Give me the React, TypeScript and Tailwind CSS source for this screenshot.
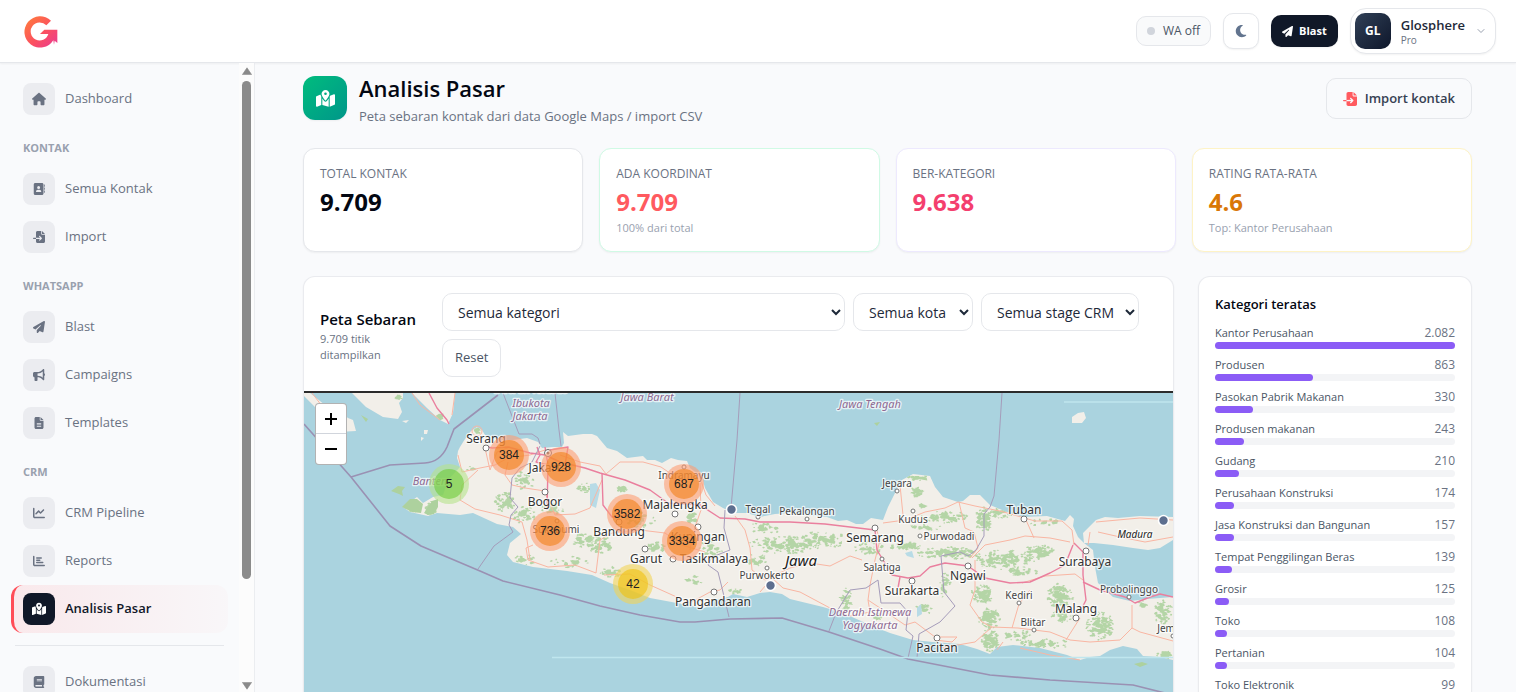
import type { ReactNode } from "react";
import type { IconType } from "react-icons";
import {
  FaAddressBook,
  FaBook,
  FaBullhorn,
  FaChartBar,
  FaChartLine,
  FaFileImport,
  FaFileLines,
  FaHouse,
  FaMapLocationDot,
  FaMoon,
  FaPaperPlane,
} from "react-icons/fa6";
import { ChevronDown } from "lucide-react";

/* ---------- Sidebar ---------- */

type NavItem = { label: string; icon: IconType; active?: boolean };

const sections: { title?: string; items: NavItem[] }[] = [
  { items: [{ label: "Dashboard", icon: FaHouse }] },
  {
    title: "KONTAK",
    items: [
      { label: "Semua Kontak", icon: FaAddressBook },
      { label: "Import", icon: FaFileImport },
    ],
  },
  {
    title: "WHATSAPP",
    items: [
      { label: "Blast", icon: FaPaperPlane },
      { label: "Campaigns", icon: FaBullhorn },
      { label: "Templates", icon: FaFileLines },
    ],
  },
  {
    title: "CRM",
    items: [
      { label: "CRM Pipeline", icon: FaChartLine },
      { label: "Reports", icon: FaChartBar },
      { label: "Analisis Pasar", icon: FaMapLocationDot, active: true },
    ],
  },
];

function NavLink({ label, icon: Icon, active }: NavItem) {
  return (
    <a
      href="#"
      aria-current={active ? "page" : undefined}
      className={
        active
          ? "flex h-12 items-center gap-2.5 rounded-xl border-l-[3px] border-[#ff4d57] bg-linear-to-r from-[#ff4d57]/10 to-[#ff4d57]/[0.02] pl-[9px] text-[13px] font-semibold text-gray-900"
          : "flex h-12 items-center gap-2.5 rounded-xl border-l-[3px] border-transparent pl-[9px] text-[13px] text-gray-500"
      }
    >
      <span
        className={
          active
            ? "flex size-8 items-center justify-center rounded-lg bg-gray-900 text-white"
            : "flex size-8 items-center justify-center rounded-lg bg-[#ebecf0] text-gray-500"
        }
      >
        <Icon className={label === "Dashboard" || active ? "size-3.5" : "size-3"} />
      </span>
      {label}
    </a>
  );
}

function Sidebar() {
  return (
    <aside className="flex w-[255px] shrink-0 border-r border-gray-200/70">
      <nav aria-label="Menu utama" className="flex-1 overflow-hidden px-[11px] pt-3">
        {sections.map((s) => (
          <div key={s.title ?? "top"}>
            {s.title && (
              <h2 className="px-3 pt-[17px] pb-[9px] text-[11px] leading-4 font-bold text-gray-400">{s.title}</h2>
            )}
            {s.items.map((it) => (
              <NavLink key={it.label} {...it} />
            ))}
          </div>
        ))}
        <hr className="mx-1 my-3 border-gray-200" />
        <NavLink label="Dokumentasi" icon={FaBook} />
      </nav>
      <div aria-hidden="true" className="flex w-[15px] flex-col items-center justify-between bg-[#fcfcfc] pt-1 pb-0.5">
        <div className="flex min-h-0 flex-1 flex-col items-center gap-1.5">
          <svg className="h-2 w-2.5 shrink-0" viewBox="0 0 10 8">
            <path d="M5 .8 9.6 7.6H.4Z" fill="#8a8a8a" stroke="#8a8a8a" strokeWidth=".6" strokeLinejoin="round" />
          </svg>
          <div className="h-[81%] w-[9px] rounded-full bg-[#8b8b8b]" />
        </div>
        <svg className="h-2 w-2.5 shrink-0" viewBox="0 0 10 8">
          <path d="M5 7.2 9.6.4H.4Z" fill="#8a8a8a" stroke="#8a8a8a" strokeWidth=".6" strokeLinejoin="round" />
        </svg>
      </div>
    </aside>
  );
}

/* ---------- Header ---------- */

function Logo() {
  return (
    <svg className="h-[33px] w-[34px]" viewBox="72 42 102 99" role="img" aria-label="Glosphere">
      <defs>
        <linearGradient id="brand" x1="0" y1="0" x2="1" y2="1">
          <stop offset="0" stopColor="#ff8038" />
          <stop offset=".55" stopColor="#fb5060" />
          <stop offset="1" stopColor="#e93a94" />
        </linearGradient>
      </defs>
      <path
        d="M153 59A47 47 0 1 0 160 118L162 131 164 119 172 126V86H133L120 99H145A27 27 0 1 1 139 73Z"
        fill="url(#brand)"
      />
    </svg>
  );
}

function Header() {
  return (
    <header className="flex h-[63px] shrink-0 items-center justify-between border-b border-gray-200 bg-white pr-5 pl-6 shadow-xs">
      <a href="#">
        <Logo />
      </a>
      <div className="flex items-center gap-3">
        <div className="flex h-[30px] items-center gap-2 rounded-[10px] border border-gray-200 bg-gray-50 px-2.5 text-[12px] font-medium text-gray-600">
          <span className="size-2 rounded-full bg-gray-300" />
          WA off
        </div>
        <button
          aria-label="Mode gelap"
          className="flex size-9 items-center justify-center rounded-[10px] border border-gray-200 bg-white text-slate-500 shadow-xs"
        >
          <FaMoon className="size-3.5" />
        </button>
        <button className="flex h-8 items-center gap-1.5 rounded-[10px] bg-gray-900 px-[11px] text-[11px] font-bold text-white shadow-xs">
          <FaPaperPlane className="size-[11px]" />
          Blast
        </button>
        <button className="flex h-[46px] items-center gap-2.5 rounded-2xl border border-gray-200 bg-white pr-2 pl-1 text-left shadow-xs">
          <span className="flex size-9 items-center justify-center rounded-[10px] bg-linear-to-br from-slate-700 to-slate-900 text-[12px] font-bold text-white">
            GL
          </span>
          <span className="flex flex-col">
            <span className="text-[13px] leading-[18px] font-semibold text-gray-800">Glosphere</span>
            <span className="text-[10px] leading-3 text-gray-500">Pro</span>
          </span>
          <ChevronDown className="size-3 text-gray-400" />
        </button>
      </div>
    </header>
  );
}

/* ---------- Map ---------- */

const land = [
  "M457 458L458 451 460 447 465 439 471 431 477 427 482 430 485 435 500 440 513 440 527 438 538 442 542 448 553 447 562 447 564 443 563 432 568 436 583 434 592 434 597 436 607 448 617 451 627 458 635 457 643 456 647 460 655 460 662 463 671 458 678 460 687 461 690 468 702 477 705 488 713 502 723 508 733 513 747 513 760 517 775 514 790 513 807 515 827 517 838 521 847 520 856 524 863 524 871 518 883 520 888 507 895 493 902 480 913 474 930 476 935 487 943 497 958 502 963 501 970 495 980 495 990 505 1007 512 1023 517 1047 516 1065 521 1070 515 1074 519 1073 526 1078 537 1084 543 1093 550 1095 567 1098 583 1113 597 1130 601 1147 599 1173 597V660L1160 657 1143 656 1137 649 1123 646 1110 650 1100 656 1090 657 1080 660 1067 655 1040 648 1013 645 997 647 990 654 977 649 960 644 933 642 913 640 890 633 870 625 843 613 823 607 790 599 782 594 770 592 760 593 747 597 733 594 728 597 713 600 705 608 698 607 677 603 650 598 630 590 610 583 592 575 567 571 533 567 513 562 507 555 510 543 521 534 513 527 497 524 473 513 460 515 437 513 428 516 410 512 403 507 417 497 423 503 433 497 443 495 448 480 460 467Z",
  "M304 393H310L325 405 338 410 348 418 353 420 356 431 338 432 331 417 318 410 304 396Z",
  "M352 393 366 407 383 417 398 419 402 412 399 403 403 398V393Z",
  "M412 393 427 408 440 420 448 424 453 413 455 393Z",
  "M1083 533 1096 520 1105 517 1118 518 1140 516 1173 517V540L1160 548 1148 550 1133 548 1113 545 1094 543 1084 543Z",
  "M1072 417 1078 413 1084 412 1086 418 1082 423 1072 423Z",
  "M424 430 428 430 427 434 424 434ZM421 437 424 438 421 441ZM402 421 409 420 406 423Z",
];

/* Woodland clusters: centre x, centre y, radius x, radius y, number of patches. */
const woods: [number, number, number, number, number][] = [
  [333, 396, 6, 7, 10],
  [365, 418, 3, 4, 2],
  [440, 417, 4, 3, 4],
  [398, 397, 6, 2, 4],
  [477, 431, 3, 3, 6],
  [471, 469, 4, 3, 4],
  [412, 507, 9, 5, 12],
  [431, 508, 6, 8, 14],
  [398, 491, 5, 3, 4],
  [505, 502, 10, 12, 26],
  [525, 480, 10, 10, 14],
  [524, 515, 12, 9, 18],
  [552, 508, 12, 7, 12],
  [585, 488, 8, 5, 10],
  [585, 540, 14, 8, 20],
  [525, 560, 12, 5, 8],
  [570, 562, 20, 6, 12],
  [600, 545, 12, 10, 18],
  [622, 488, 6, 4, 6],
  [640, 520, 16, 8, 12],
  [612, 572, 12, 6, 10],
  [655, 548, 10, 7, 12],
  [692, 518, 6, 6, 10],
  [710, 550, 12, 10, 14],
  [690, 580, 14, 6, 6],
  [735, 592, 8, 3, 6],
  [765, 528, 16, 6, 12],
  [785, 545, 36, 9, 44],
  [820, 540, 34, 8, 34],
  [755, 560, 14, 7, 8],
  [846, 600, 6, 12, 16],
  [870, 548, 16, 7, 18],
  [916, 492, 7, 5, 14],
  [918, 478, 14, 3, 8],
  [923, 506, 3, 2, 4],
  [945, 517, 24, 6, 26],
  [925, 527, 18, 3, 8],
  [905, 546, 16, 5, 20],
  [950, 553, 34, 6, 44],
  [984, 520, 9, 13, 32],
  [1000, 513, 12, 5, 14],
  [1045, 523, 18, 4, 8],
  [1005, 560, 30, 10, 60],
  [1038, 552, 16, 7, 30],
  [1022, 572, 16, 4, 14],
  [945, 585, 5, 14, 14],
  [925, 608, 10, 6, 6],
  [982, 594, 12, 9, 34],
  [990, 618, 12, 10, 36],
  [1060, 596, 13, 13, 46],
  [1062, 616, 12, 7, 16],
  [990, 640, 9, 12, 40],
  [1015, 635, 16, 6, 14],
  [1045, 644, 26, 5, 22],
  [1100, 626, 14, 14, 54],
  [1163, 612, 10, 12, 34],
  [1142, 605, 5, 5, 6],
  [1165, 655, 8, 4, 14],
  [877, 617, 6, 4, 4],
];

function makeRandom(seed: number) {
  let s = seed;
  return () => {
    s = (s * 1664525 + 1013904223) % 4294967296;
    return s / 4294967296;
  };
}

function woodland() {
  const rand = makeRandom(7);
  let d = "";
  for (const [cx, cy, rx, ry, n] of woods) {
    for (let i = 0; i < n * 2; i++) {
      const a = rand() * Math.PI * 2;
      const q = rand() ** 0.65;
      const x = cx + Math.cos(a) * rx * q;
      const y = cy + Math.sin(a) * ry * q;
      const size = 0.6 + rand() * 1.9 * (1.2 - q);
      const pts: string[] = [];
      for (let k = 0; k < 7; k++) {
        const t = (k / 7) * Math.PI * 2;
        const r = size * (0.5 + rand() * 0.9);
        pts.push(`${(x + Math.cos(t) * r * 1.5).toFixed(1)} ${(y + Math.sin(t) * r).toFixed(1)}`);
      }
      d += `M${pts.join("L")}Z`;
    }
  }
  return d;
}

const woodPath = woodland();

const borders = [
  "M503 393 519 434H532L538 438 540 444",
  "M555 393 559 430 561 446",
  "M740 393 737 440 731 508",
  "M1002 393 999 440 994 496 990 507 984 514 984 536 976 550 968 556",
  "M540 446 532 462 520 468 512 478 510 498 518 507 511 515 509 525 513 532 494 546 478 569",
  "M725 510 724 528 730 550 712 557 708 565 718 572 722 588 729 617",
  "M829 631 836 613 850 590 866 588 878 580 881 603 900 603 908 612 906 630 913 636 908 658",
  "M917 658 919 634 940 622 955 606 944 592 941 556 960 552 968 556",
];

const seaBorders = [
  "M304 424 351 477 390 526 421 546 480 571 503 581 560 595 600 606 640 615 680 622 695 622 730 619 782 618 829 632 880 649 908 659 990 675 1050 680 1133 685 1173 695",
  "M351 477 390 465 425 463Q440 462 447 447L454 429 498 395",
];

const roads = [
  "M458 455 462 472 480 468 495 465 508 458 530 455 545 450",
  "M485 448 490 470 497 452 510 447",
  "M478 470 462 485 460 500 475 509 500 515 522 522 527 540 530 560",
  "M508 462 505 475 512 485 525 488 545 491 548 500",
  "M545 492 555 515 575 514 590 508 602 480",
  "M560 455 580 462 600 466 606 474 620 462 643 462 661 467 680 480 700 478 706 495 715 506",
  "M533 545 526 548 528 560 548 567 575 565 596 573",
  "M596 573 600 540 612 533 640 530 665 533 682 545 705 552",
  "M604 575 630 574 650 585 690 603 710 592 720 590 728 582",
  "M700 483 701 510 694 530 690 550",
  "M735 516 745 530 750 548 752 570 765 580 775 575 790 568 810 563 830 566 850 556 862 560",
  "M760 592 772 578 783 588 800 592 830 608 850 616 870 612 868 600",
  "M875 525 880 540 875 560 870 585 868 600 880 608 905 625 915 622 935 637",
  "M900 485 903 515M883 523 905 520 925 512 945 508 958 502 975 506 1000 511 1035 521 1062 521 1072 530 1074 545",
  "M959 502 965 528 974 532 978 548 970 558",
  "M972 558 985 545 1010 540 1025 536 1050 538 1070 542",
  "M1026 520 1034 538M975 560 975 590 970 605 982 622 992 627 1018 628 1050 632 1070 640 1090 642 1120 640 1132 628 1140 632 1173 641",
  "M1030 590 1019 604 1012 628M992 627 975 642 940 648",
  "M1022 583 1045 576 1075 574 1083 580M1080 618 1066 640",
  "M1132 605 1132 628M1003 642 997 650M1020 648 1050 655 1080 660",
  "M1090 532 1088 545M1098 532 1120 537 1145 542 1173 537M1096 522 1140 518 1173 520",
  "M937 637 957 637 952 642 935 640",
  "M412 393 420 405 440 420M455 393 452 415",
  "M312 393 325 410 345 418",
];

const motorways = [
  "M484 446 492 448 508 447 530 453 545 455 560 462 585 468 600 473 625 480 650 490 668 503",
  "M602 473 603 505 612 517 635 515",
  "M668 503 700 505 720 518 745 519 760 522 790 522 825 524 850 527 875 530",
  "M537 447 540 455 536 462 548 465 545 447M550 450 568 447 565 465M548 465 547 510",
  "M875 530 877 550 883 560 892 575 908 578 920 576 930 567 945 563 968 566 985 578 1010 583 1030 582 1050 573 1065 565 1073 545",
  "M900 577 898 588M1074 543 1083 552 1083 575 1086 600 1080 612",
  "M1083 582 1100 590 1125 597 1135 603 1150 597 1160 594 1173 597",
  "M429 393 437 408 447 420 449 424",
];

type Label = { text: string; x: number; y: number; kind: "city" | "town" | "region" | "island" | "isle" };

const labels: Label[] = [
  { text: "Daerah Khusus", x: 531, y: 393, kind: "region" },
  { text: "Ibukota", x: 531, y: 407, kind: "region" },
  { text: "Jakarta", x: 530, y: 420, kind: "region" },
  { text: "Jawa Barat", x: 647, y: 401, kind: "region" },
  { text: "Jawa Tengah", x: 870, y: 408, kind: "region" },
  { text: "Banten", x: 430, y: 485, kind: "region" },
  { text: "Daerah Istimewa", x: 870, y: 616, kind: "region" },
  { text: "Yogyakarta", x: 870, y: 629, kind: "region" },
  { text: "Serang", x: 486, y: 443, kind: "city" },
  { text: "Jakarta", x: 548, y: 472, kind: "city" },
  { text: "Bogor", x: 545, y: 506, kind: "city" },
  { text: "Sukabumi", x: 556, y: 533, kind: "town" },
  { text: "Bandung", x: 619, y: 536, kind: "city" },
  { text: "Majalengka", x: 675, y: 509, kind: "city" },
  { text: "Indramayu", x: 684, y: 479, kind: "town" },
  { text: "Kuningan", x: 698, y: 541, kind: "city" },
  { text: "Garut", x: 646, y: 563, kind: "city" },
  { text: "Tasikmalaya", x: 714, y: 563, kind: "city" },
  { text: "Pangandaran", x: 713, y: 606, kind: "city" },
  { text: "Tegal", x: 758, y: 513, kind: "town" },
  { text: "Pekalongan", x: 807, y: 515, kind: "town" },
  { text: "Purwokerto", x: 767, y: 579, kind: "town" },
  { text: "Jawa", x: 801, y: 566, kind: "island" },
  { text: "Semarang", x: 875, y: 542, kind: "city" },
  { text: "Salatiga", x: 882, y: 571, kind: "town" },
  { text: "Jepara", x: 897, y: 487, kind: "town" },
  { text: "Kudus", x: 913, y: 523, kind: "town" },
  { text: "Purwodadi", x: 949, y: 540, kind: "town" },
  { text: "Ngawi", x: 968, y: 580, kind: "city" },
  { text: "Surakarta", x: 912, y: 595, kind: "city" },
  { text: "Pacitan", x: 937, y: 652, kind: "city" },
  { text: "Kediri", x: 1019, y: 599, kind: "town" },
  { text: "Blitar", x: 1033, y: 626, kind: "town" },
  { text: "Tuban", x: 1024, y: 514, kind: "city" },
  { text: "Surabaya", x: 1085, y: 566, kind: "city" },
  { text: "Malang", x: 1076, y: 613, kind: "city" },
  { text: "Madura", x: 1135, y: 538, kind: "isle" },
  { text: "Probolinggo", x: 1129, y: 593, kind: "town" },
  { text: "Jember", x: 1174, y: 632, kind: "town" },
];

const labelClass: Record<Label["kind"], string> = {
  city: "fill-[#333] text-[12px]",
  town: "fill-[#444] text-[10px]",
  region: "fill-[#8d6a92] text-[11px] italic",
  island: "fill-[#222] text-[15px] italic",
  isle: "fill-[#222] text-[10px] italic",
};

const places: [number, number, number][] = [
  [486, 448, 3],
  [545, 492, 3],
  [675, 514, 3],
  [698, 527, 3],
  [645, 549, 3],
  [673, 559, 3],
  [714, 592, 3],
  [684, 467, 2],
  [557, 521, 2],
  [619, 522, 3],
  [758, 517, 2],
  [807, 519, 2],
  [767, 568, 2],
  [875, 528, 3],
  [882, 559, 2],
  [897, 491, 2],
  [913, 511, 2],
  [920, 536, 2],
  [968, 566, 3],
  [912, 581, 3],
  [937, 638, 3],
  [1019, 603, 2],
  [1034, 630, 2],
  [1024, 519, 3],
  [1086, 551, 3],
  [1076, 618, 3],
  [1129, 597, 2],
  [1173, 636, 2],
];

const tones = {
  large: ["rgba(253,156,115,.6)", "rgba(241,128,23,.6)"],
  medium: ["rgba(241,211,87,.6)", "rgba(240,194,12,.6)"],
  small: ["rgba(181,226,140,.6)", "rgba(110,204,57,.6)"],
};

const clusters: { n: number; x: number; y: number; tone: keyof typeof tones }[] = [
  { n: 384, x: 509, y: 455, tone: "large" },
  { n: 928, x: 561, y: 467, tone: "large" },
  { n: 5, x: 449, y: 484, tone: "small" },
  { n: 736, x: 550, y: 531, tone: "large" },
  { n: 687, x: 684, y: 484, tone: "large" },
  { n: 3582, x: 627, y: 514, tone: "large" },
  { n: 3334, x: 682, y: 541, tone: "large" },
  { n: 42, x: 633, y: 584, tone: "medium" },
];

const pins = [
  [731, 509],
  [770, 585],
  [1163, 520],
];

function JavaMap() {
  return (
    <svg
      className="absolute inset-0 size-full"
      viewBox="304 393 869 299"
      preserveAspectRatio="xMinYMin slice"
      role="img"
      aria-label="Peta sebaran kontak di Pulau Jawa"
    >
      <defs>
        <clipPath id="land">
          <path d={land.join("")} />
        </clipPath>
      </defs>
      <rect x="304" y="393" width="2000" height="1200" fill="#aad3df" />
      <path d={land.join("")} fill="#f2efe9" />
      <path d={woodPath} fill="#add19e" fillOpacity=".9" clipPath="url(#land)" />
      <g fill="#add19e">
        <path d="M402 507 410 499 417 499 423 504 421 513 412 512Z" />
        <path d="M424 513 432 501 438 499 438 507 434 514 428 515Z" />
        <path d="M391 491 398 486 405 487 402 491 403 496 399 494ZM361 415 368 419 366 422Z" />
        <path d="M1134 664 1142 662 1148 664 1140 667ZM874 423 880 422 877 426Z" />
      </g>
      <path d="M590 484 596 483 600 490 596 508 590 505ZM905 553 912 551 914 558 907 556ZM917 608 921 604 922 614 917 617Z" fill="#b8dbe6" />
      <g fill="none" stroke="#f9b6a3" strokeWidth="1" strokeLinejoin="round">
        {roads.map((d) => (
          <path key={d} d={d} />
        ))}
        <circle cx="477" cy="431" r="5" />
      </g>
      <g fill="none" stroke="#ea7f9e" strokeWidth="1.4" strokeLinejoin="round">
        {motorways.map((d) => (
          <path key={d} d={d} />
        ))}
      </g>
      <g fill="none" stroke="#a59cba" strokeWidth="1" strokeLinejoin="round">
        {borders.map((d) => (
          <path key={d} d={d} />
        ))}
      </g>
      <g fill="none" stroke="#9a91b3" strokeWidth="1.6" strokeLinejoin="round">
        {seaBorders.map((d) => (
          <path key={d} d={d} />
        ))}
      </g>
      <path d="M552 657.5H1173M1064 402H1173" stroke="#c0e6ee" strokeWidth="1.5" />
      {places.map(([x, y, r]) => (
        <circle key={`${x}-${y}`} cx={x} cy={y} r={r} fill="#fff" stroke="#666" strokeWidth=".9" />
      ))}
      <circle cx="548" cy="453" r="3.5" fill="#fff" stroke="#666" />
      <circle cx="548" cy="453" r="1.5" fill="#666" />
      <g
        className="font-['Noto_Sans',sans-serif]"
        textAnchor="middle"
        stroke="#fff"
        strokeOpacity=".7"
        strokeWidth="2.6"
        strokeLinejoin="round"
        paintOrder="stroke"
      >
        {labels.map((l) => (
          <text key={`${l.text}-${l.y}`} x={l.x} y={l.y} className={labelClass[l.kind]}>
            {l.text}
          </text>
        ))}
      </g>
      {pins.map(([x, y]) => (
        <circle key={x} cx={x + 0.5} cy={y + 0.5} r="5" fill="#5d6f8f" stroke="#fff" strokeWidth="1.6" />
      ))}
      <g textAnchor="middle" className="fill-[#222] font-['Liberation_Sans',Arial,sans-serif] text-[12px]">
        {clusters.map((c) => (
          <g key={c.n}>
            <circle cx={c.x} cy={c.y} r="20" style={{ fill: tones[c.tone][0] }} />
            <circle cx={c.x} cy={c.y} r="15" style={{ fill: tones[c.tone][1] }} />
            <text x={c.x} y={c.y + 4}>
              {c.n}
            </text>
          </g>
        ))}
      </g>
    </svg>
  );
}

function FilterSelect({ label, className }: { label: string; className: string }) {
  return (
    <select
      aria-label={label}
      className={`h-[38px] rounded-[10px] border border-gray-200 bg-white pl-[11px] text-[14px] text-gray-800 ${className}`}
    >
      <option>{label}</option>
    </select>
  );
}

function MapCard() {
  return (
    <section className="flex min-w-0 flex-col overflow-hidden rounded-t-xl border border-b-0 border-gray-200/80 bg-white shadow-xs">
      <div className="flex items-center gap-3 px-4 pt-4 pb-3.5">
        <div className="w-[110px] shrink-0">
          <h2 className="text-[15px] leading-6 font-semibold text-gray-950">Peta Sebaran</h2>
          <p className="w-24 text-[11px] leading-4 text-gray-500">9.709 titik ditampilkan</p>
        </div>
        <div className="flex flex-1 flex-wrap gap-2 pr-[18px]">
          <FilterSelect label="Semua kategori" className="grow basis-[400px]" />
          <FilterSelect label="Semua kota" className="w-[120px]" />
          <FilterSelect label="Semua stage CRM" className="w-[158px]" />
          <button className="h-[38px] rounded-[10px] border border-gray-200 bg-white px-3 text-[13px] text-gray-600">
            Reset
          </button>
        </div>
      </div>
      <div className="relative min-h-72 flex-1 overflow-hidden border-t-2 border-[#2b2b2b]">
        <JavaMap />
        <div className="absolute top-2.5 left-[11px] flex flex-col rounded-sm border border-black/30 bg-white text-black">
          <button aria-label="Perbesar" className="flex size-[30px] items-center justify-center border-b border-gray-300">
            <svg className="size-3.5" viewBox="0 0 14 14" stroke="currentColor" strokeWidth="2">
              <path d="M7 1V13M1 7H13" />
            </svg>
          </button>
          <button aria-label="Perkecil" className="flex size-[30px] items-center justify-center">
            <svg className="size-3.5" viewBox="0 0 14 14" stroke="currentColor" strokeWidth="2">
              <path d="M1 7H13" />
            </svg>
          </button>
        </div>
      </div>
    </section>
  );
}

/* ---------- Statistics ---------- */

const stats = [
  { label: "TOTAL KONTAK", value: "9.709", border: "border-gray-200", tone: "text-gray-950" },
  { label: "ADA KOORDINAT", value: "9.709", note: "100% dari total", border: "border-emerald-100", tone: "text-[#ff5a5f]" },
  { label: "BER-KATEGORI", value: "9.638", border: "border-violet-100", tone: "text-[#f43f6e]" },
  { label: "RATING RATA-RATA", value: "4.6", note: "Top: Kantor Perusahaan", border: "border-amber-100", tone: "text-[#d97706]" },
];

const categories: [string, string, number][] = [
  ["Kantor Perusahaan", "2.082", 100],
  ["Produsen", "863", 41],
  ["Pasokan Pabrik Makanan", "330", 16],
  ["Produsen makanan", "243", 12],
  ["Gudang", "210", 10],
  ["Perusahaan Konstruksi", "174", 8],
  ["Jasa Konstruksi dan Bangunan", "157", 8],
  ["Tempat Penggilingan Beras", "139", 7],
  ["Grosir", "125", 6],
  ["Toko", "108", 5],
  ["Pertanian", "104", 5],
  ["Toko Elektronik", "99", 5],
];

function Card({ className, children }: { className: string; children: ReactNode }) {
  return <section className={`border bg-white px-4 shadow-xs ${className}`}>{children}</section>;
}

export default function App() {
  return (
    <div className="flex h-screen flex-col overflow-hidden bg-[#f9fafc] font-['Open_Sans','Noto_Sans',sans-serif] text-gray-900">
      <Header />
      <div className="flex min-h-0 flex-1">
        <Sidebar />
        <main className="flex min-w-0 flex-1 flex-col overflow-hidden pt-[13px] pr-11 pl-12">
          <div className="mb-5 flex items-start justify-between">
            <div className="flex items-start gap-3">
              <span className="flex size-11 items-center justify-center rounded-xl bg-linear-to-br from-emerald-500 to-teal-600 text-white shadow-xs">
                <FaMapLocationDot className="size-[19px]" />
              </span>
              <div>
                <h1 className="text-[22px] leading-6 font-semibold text-gray-950">Analisis Pasar</h1>
                <p className="mt-1 text-[13px] leading-6 text-gray-500">
                  Peta sebaran kontak dari data Google Maps / import CSV
                </p>
              </div>
            </div>
            <button className="mt-0.5 flex h-[41px] items-center gap-2 rounded-[10px] border border-gray-200 px-4 text-[13px] font-semibold text-gray-700">
              <FaFileImport className="size-3.5 text-[#ff5a5f]" />
              Import kontak
            </button>
          </div>

          <div className="mb-6 grid grid-cols-4 gap-4">
            {stats.map((s) => (
              <Card key={s.label} className={`h-[104px] rounded-xl pt-[17px] ${s.border}`}>
                <h2 className="text-[12px] leading-4 font-medium text-gray-500">{s.label}</h2>
                <p className={`mt-1 text-[24px] leading-8 font-bold ${s.tone}`}>{s.value}</p>
                {s.note && <p className="mt-0.5 text-[11px] leading-4 text-gray-400">{s.note}</p>}
              </Card>
            ))}
          </div>

          <div className="grid min-h-0 flex-1 grid-cols-[minmax(0,1fr)_274px] gap-6">
            <MapCard />
            <Card className="overflow-hidden rounded-t-xl border-b-0 border-gray-200/80 pt-4">
              <h2 className="mb-2.5 text-[13px] leading-[22px] font-semibold text-gray-950">Kategori teratas</h2>
              <ul className="flex flex-col gap-2">
                {categories.map(([name, count, pct]) => (
                  <li key={name}>
                    <div className="flex justify-between text-[11px] leading-4">
                      <span className="text-gray-600">{name}</span>
                      <span className="text-[12px] text-gray-500">{count}</span>
                    </div>
                    <div className="mt-px h-[7px] rounded-full bg-gray-100">
                      <div className="h-full rounded-full bg-[#8b5cf6]" style={{ width: `${pct}%` }} />
                    </div>
                  </li>
                ))}
              </ul>
            </Card>
          </div>
        </main>
      </div>
    </div>
  );
}
